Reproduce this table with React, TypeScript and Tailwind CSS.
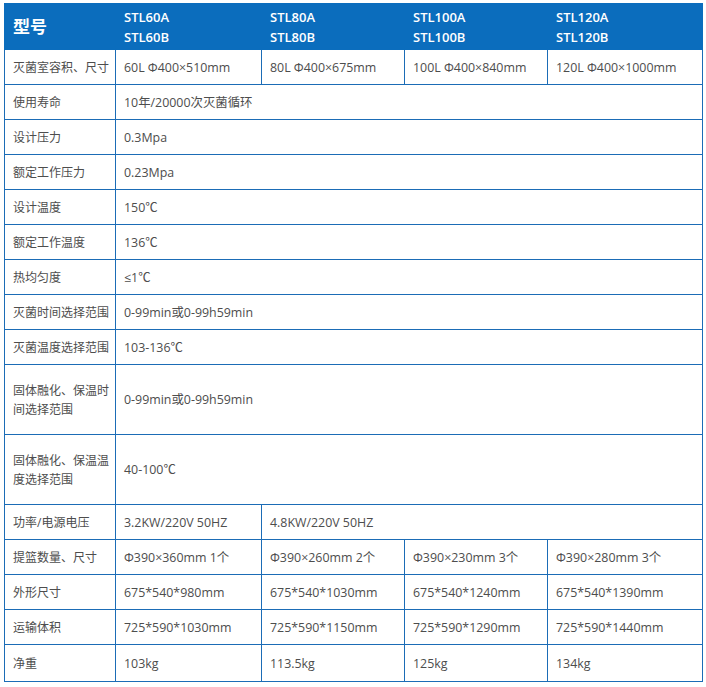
const models = [
  ["STL60A", "STL60B"],
  ["STL80A", "STL80B"],
  ["STL100A", "STL100B"],
  ["STL120A", "STL120B"],
]

type Row = { label: string[]; cells: string[]; tall?: boolean; last?: boolean }

const rows: Row[] = [
  { label: ["灭菌室容积、尺寸"], cells: ["60L Φ400×510mm", "80L Φ400×675mm", "100L Φ400×840mm", "120L Φ400×1000mm"] },
  { label: ["使用寿命"], cells: ["10年/20000次灭菌循环"] },
  { label: ["设计压力"], cells: ["0.3Mpa"] },
  { label: ["额定工作压力"], cells: ["0.23Mpa"] },
  { label: ["设计温度"], cells: ["150℃"] },
  { label: ["额定工作温度"], cells: ["136℃"] },
  { label: ["热均匀度"], cells: ["≤1℃"] },
  { label: ["灭菌时间选择范围"], cells: ["0-99min或0-99h59min"] },
  { label: ["灭菌温度选择范围"], cells: ["103-136℃"] },
  { label: ["固体融化、保温时", "间选择范围"], cells: ["0-99min或0-99h59min"], tall: true },
  { label: ["固体融化、保温温", "度选择范围"], cells: ["40-100℃"], tall: true },
  { label: ["功率/电源电压"], cells: ["3.2KW/220V 50HZ", "4.8KW/220V 50HZ"] },
  { label: ["提篮数量、尺寸"], cells: ["Φ390×360mm 1个", "Φ390×260mm 2个", "Φ390×230mm 3个", "Φ390×280mm 3个"] },
  { label: ["外形尺寸"], cells: ["675*540*980mm", "675*540*1030mm", "675*540*1240mm", "675*540*1390mm"] },
  { label: ["运输体积"], cells: ["725*590*1030mm", "725*590*1150mm", "725*590*1290mm", "725*590*1440mm"] },
  { label: ["净重"], cells: ["103kg", "113.5kg", "125kg", "134kg"], last: true },
]

// one full-width cell spans all four model columns; two cells: the second spans three
function colSpanFor(count: number, index: number) {
  if (count === 1) return 4
  if (count === 2 && index === 1) return 3
  return 1
}

export default function App() {
  return (
    <div className="bg-white pt-[3px] pl-[4px] font-['Open_Sans','Noto_Sans_CJK_SC',sans-serif] text-[12.4px] text-[#4d4d4d]">
      <table className="w-[698px] border-collapse table-fixed">
        <colgroup>
          <col className="w-[111px]" />
          <col className="w-[146px]" />
          <col className="w-[143px]" />
          <col className="w-[143px]" />
          <col className="w-[155px]" />
        </colgroup>
        <thead>
          <tr className="h-[46px] bg-[#0b6dbd] text-white">
            <th className="border border-[#0b6dbd] pl-[8px] text-left align-middle text-[17px] font-semibold">
              型号
            </th>
            {models.map(([a, b]) => (
              <th
                key={a}
                className="border border-[#0b6dbd] pl-[8px] text-left align-middle text-[13px] font-semibold leading-[20px]"
              >
                <div>{a}</div>
                <div>{b}</div>
              </th>
            ))}
          </tr>
        </thead>
        <tbody>
          {rows.map((row) => (
            <tr
              key={row.label.join("")}
              className={row.tall ? "h-[70px]" : row.last ? "h-[37px]" : "h-[35px]"}
            >
              <td className="border border-[#1b6cb6] pl-[8px] pr-0 align-middle text-[12px] leading-[19px] whitespace-nowrap">
                {row.label.map((line) => (
                  <div key={line}>{line}</div>
                ))}
              </td>
              {row.cells.map((cell, i) => (
                <td
                  key={i}
                  colSpan={colSpanFor(row.cells.length, i)}
                  className="border border-[#1b6cb6] pl-[8px] align-middle whitespace-nowrap leading-[19px]"
                >
                  {cell}
                </td>
              ))}
            </tr>
          ))}
        </tbody>
      </table>
    </div>
  )
}
